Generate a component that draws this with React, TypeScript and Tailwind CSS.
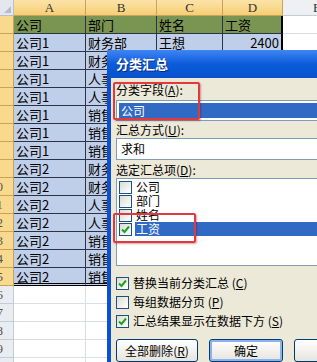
import React from 'react';

const CJK = { fontFamily: '"Noto Sans CJK SC", "Liberation Sans", sans-serif' };

const tableRows: string[][] = [
  ['公司', '部门', '姓名', '工资'],
  ['公司1', '财务部', '王想', '2400'],
  ['公司1', '财务部', '', ''],
  ['公司1', '人事部', '', ''],
  ['公司1', '人事部', '', ''],
  ['公司1', '销售部', '', ''],
  ['公司1', '销售部', '', ''],
  ['公司1', '销售部', '', ''],
  ['公司2', '财务部', '', ''],
  ['公司2', '财务部', '', ''],
  ['公司2', '人事部', '', ''],
  ['公司2', '人事部', '', ''],
  ['公司2', '销售部', '', ''],
  ['公司2', '销售部', '', ''],
  ['公司2', '销售部', '', ''],
];

const RowHead = ({ n, active }: { n: number; active: boolean }) => (
  <div
    className={`h-[18px] overflow-hidden border-r border-b ${
      active ? 'bg-[#f8d98e] border-[#c9a35a]' : 'bg-[#e9ecf1] border-[#c5cbd6]'
    }`}
  >
    <div className="ml-[-16px] w-[25px] text-center text-[13px] leading-[18px] text-[#555]" style={{ fontFamily: '"Liberation Serif", serif' }}>
      {n}
    </div>
  </div>
);

const Check = ({ checked }: { checked?: boolean }) => (
  <div className="w-[13px] h-[13px] shrink-0 border border-[#1c5180] bg-gradient-to-br from-[#dcdcd5] to-white flex items-center justify-center">
    {checked && (
      <svg width="9" height="9" viewBox="0 0 9 9">
        <polyline points="1,4.5 3.5,7 8,1.5" fill="none" stroke="#21a121" strokeWidth="2" />
      </svg>
    )}
  </div>
);

const Mn = ({ k }: { k: string }) => (
  <span>
    (<span className="underline">{k}</span>)
  </span>
);

const Button = ({ children, primary, w }: { children: React.ReactNode; primary?: boolean; w: string }) => (
  <div
    className={`${w} h-[23px] shrink-0 rounded-[3px] border border-[#003c74] bg-gradient-to-b from-white to-[#e6e4dc] flex items-center justify-center text-[12px] ${
      primary ? 'shadow-[inset_0_0_0_2px_#8cb2ef]' : ''
    }`}
  >
    {children}
  </div>
);

export default function App() {
  return (
    <div className="relative w-[317px] h-[362px] overflow-hidden bg-white text-black" style={CJK}>
      {/* spreadsheet */}
      <div className="grid grid-cols-[14px_72px_71px_66px_60px_1fr]">
        <div className="h-[16px] bg-[#e4e8ee] border-r border-b border-[#b9c0cc] flex items-end justify-end p-[2px]">
          <div className="w-0 h-0 border-l-[7px] border-l-transparent border-b-[7px] border-b-[#b5bcc7]" />
        </div>
        {['A', 'B', 'C', 'D'].map((c) => (
          <div
            key={c}
            className="h-[16px] bg-gradient-to-b from-[#fbe3a8] to-[#f6cf74] border-r border-b border-[#c9a35a] text-center text-[13px] leading-[16px] text-[#333]"
            style={{ fontFamily: '"Liberation Serif", serif' }}
          >
            {c}
          </div>
        ))}
        <div className="h-[16px] bg-[#eef0f4] border-b border-[#c5cbd6] pl-[30px] text-[13px] leading-[16px] text-[#333]" style={{ fontFamily: '"Liberation Serif", serif' }}>
          E
        </div>

        {tableRows.map((r, i) => (
          <React.Fragment key={i}>
            <RowHead n={i + 1} active />
            {r.map((v, j) => (
              <div
                key={j}
                className={`h-[18px] px-[2px] text-[13px] leading-[17px] whitespace-nowrap overflow-hidden border-r border-b border-[#2b3347] ${
                  i === 0 ? 'bg-[#7a9452]' : 'bg-[#c0cfe9]'
                } ${j === 3 && i > 0 ? 'text-right' : ''} ${j === 3 && i < 2 ? 'border-r-2 border-r-black' : ''} ${
                  i === tableRows.length - 1 ? 'border-b-[3px] border-double border-b-black' : ''
                }`}
              >
                {v}
              </div>
            ))}
            <div className="h-[18px] border-b border-[#d8dde6]" />
          </React.Fragment>
        ))}

        {[16, 17, 18, 19, 20].map((n) => (
          <React.Fragment key={n}>
            <RowHead n={n} active={false} />
            {[0, 1, 2, 3, 4].map((j) => (
              <div key={j} className="h-[18px] border-r border-b border-[#d8dde6]" />
            ))}
          </React.Fragment>
        ))}
      </div>

      {/* dialog */}
      <div className="absolute left-[107px] top-[50px] w-[240px] h-[340px] bg-[#0a50d0] pl-[4px] flex flex-col">
        <div className="h-[28px] -ml-[4px] bg-gradient-to-b from-[#3d86f2] via-[#0b5bdb] to-[#0852cc] flex items-center pl-[9px] text-white text-[13px] font-bold [text-shadow:1px_1px_0_#0a2a80]">
          分类汇总
        </div>
        <div className="flex-1 bg-[#ece9d8] pl-[5px] flex flex-col text-[12px] leading-[14px]">
          <div className="mt-[5px] h-[14px]">
            分类字段<Mn k="A" />:
          </div>
          <div className="mt-[3px] h-[21px] border border-[#7f9db9] bg-white p-[2px]">
            <div className="h-[15px] bg-[#316ac5] text-white pl-[2px] leading-[15px]">公司</div>
          </div>
          <div className="mt-[2px] h-[14px]">
            汇总方式<Mn k="U" />:
          </div>
          <div className="mt-[1px] h-[22px] border border-[#7f9db9] bg-white pl-[4px] flex items-center">求和</div>
          <div className="mt-[3px] h-[14px]">
            选定汇总项<Mn k="D" />:
          </div>
          <div className="mt-[1px] h-[88px] border border-[#7f9db9] bg-white pt-[1px] pl-[2px] flex flex-col">
            {['公司', '部门', '姓名', '工资'].map((t, i) => (
              <div key={t} className="h-[14px] flex items-center gap-[3px]">
                <Check checked={i === 3} />
                <span className={`flex-1 h-[14px] pl-[1px] ${i === 3 ? 'bg-[#316ac5] text-white' : ''}`}>{t}</span>
              </div>
            ))}
          </div>
          <div className="mt-[10px] flex flex-col gap-[5px]">
            <div className="h-[14px] flex items-center gap-[4px]">
              <Check checked />
              <span>
                替换当前分类汇总 <Mn k="C" />
              </span>
            </div>
            <div className="h-[14px] flex items-center gap-[4px]">
              <Check />
              <span>
                每组数据分页 <Mn k="P" />
              </span>
            </div>
            <div className="h-[14px] flex items-center gap-[4px]">
              <Check checked />
              <span>
                汇总结果显示在数据下方 <Mn k="S" />
              </span>
            </div>
          </div>
          <div className="mt-[11px] flex gap-[11px]">
            <Button w="w-[82px]">
              全部删除 <Mn k="R" />
            </Button>
            <Button w="w-[74px]" primary>
              确定
            </Button>
            <Button w="w-[74px]">取消</Button>
          </div>
        </div>
      </div>

      {/* red annotation boxes */}
      <div className="absolute left-[113px] top-[82px] w-[87px] h-[38px] border-2 border-[#e0393e] rounded-[2px] shadow-[1px_1px_2px_rgba(120,0,0,0.35)]" />
      <div className="absolute left-[113px] top-[213px] w-[83px] h-[30px] border-2 border-[#e0393e] rounded-[2px] shadow-[1px_1px_2px_rgba(120,0,0,0.35)]" />
    </div>
  );
}
